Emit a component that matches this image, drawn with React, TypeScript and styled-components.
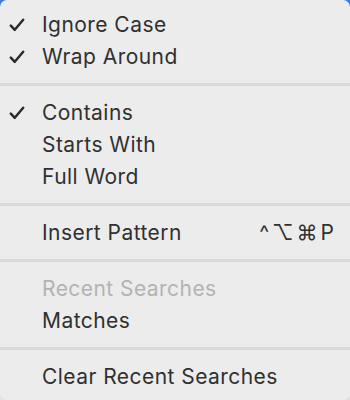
import React from "react";
import styled, { createGlobalStyle } from "styled-components";

const Global = createGlobalStyle`
  html, body {
    margin: 0;
    padding: 0;
    background: linear-gradient(#3b7be0 0 12px, #e2e2e2 12px);
  }
`;

type Item =
  | { kind: "sep" }
  | { kind: "item"; label: string; checked?: boolean; disabled?: boolean; shortcut?: string };

const items: Item[] = [
  { kind: "item", label: "Ignore Case", checked: true },
  { kind: "item", label: "Wrap Around", checked: true },
  { kind: "sep" },
  { kind: "item", label: "Contains", checked: true },
  { kind: "item", label: "Starts With" },
  { kind: "item", label: "Full Word" },
  { kind: "sep" },
  { kind: "item", label: "Insert Pattern", shortcut: "^⌥⌘P" },
  { kind: "sep" },
  { kind: "item", label: "Recent Searches", disabled: true },
  { kind: "item", label: "Matches" },
  { kind: "sep" },
  { kind: "item", label: "Clear Recent Searches" },
];

function Check() {
  return (
    <svg width="16" height="14" viewBox="0 0 16 14">
      <path
        d="M1.8 7.6 L5.8 11.8 L14.2 1.8"
        fill="none"
        stroke="#2b2b2b"
        strokeWidth="2.5"
        strokeLinecap="round"
        strokeLinejoin="round"
      />
    </svg>
  );
}

export default function App() {
  return (
    <>
      <Global />
      <Menu>
        {items.map((it, i) =>
          it.kind === "sep" ? (
            <Separator key={i} />
          ) : (
            <Row key={i} disabled={it.disabled}>
              <Mark>{it.checked && <Check />}</Mark>
              <Label>{it.label}</Label>
              {it.shortcut && <Shortcut>{it.shortcut}</Shortcut>}
            </Row>
          )
        )}
      </Menu>
    </>
  );
}

const Menu = styled.div`
  width: 350px;
  height: 400px;
  box-sizing: border-box;
  background: #ececec;
  border-radius: 7px;
  padding: 8px 0;
  display: flex;
  flex-direction: column;
  font-family: Inter, "Noto Sans", sans-serif;
  font-size: 21px;
  overflow: hidden;
`;

const Row = styled.div<{ disabled?: boolean }>`
  height: 32px;
  display: flex;
  align-items: center;
  padding: 0 16px 0 9px;
  color: ${(p) => (p.disabled ? "#b3b3b3" : "#303030")};
  letter-spacing: 0.45px;
`;

const Mark = styled.span`
  width: 33px;
  display: flex;
  align-items: center;
  padding-top: 1px;
`;

const Label = styled.span`
  flex: 1;
`;

const Shortcut = styled.span`
  letter-spacing: 3px;
  margin-right: -3px;
`;

const Separator = styled.div`
  height: 24px;
  display: flex;
  align-items: center;
  &::after {
    content: "";
    display: block;
    width: 100%;
    height: 3px;
    background: #dadada;
  }
`;
